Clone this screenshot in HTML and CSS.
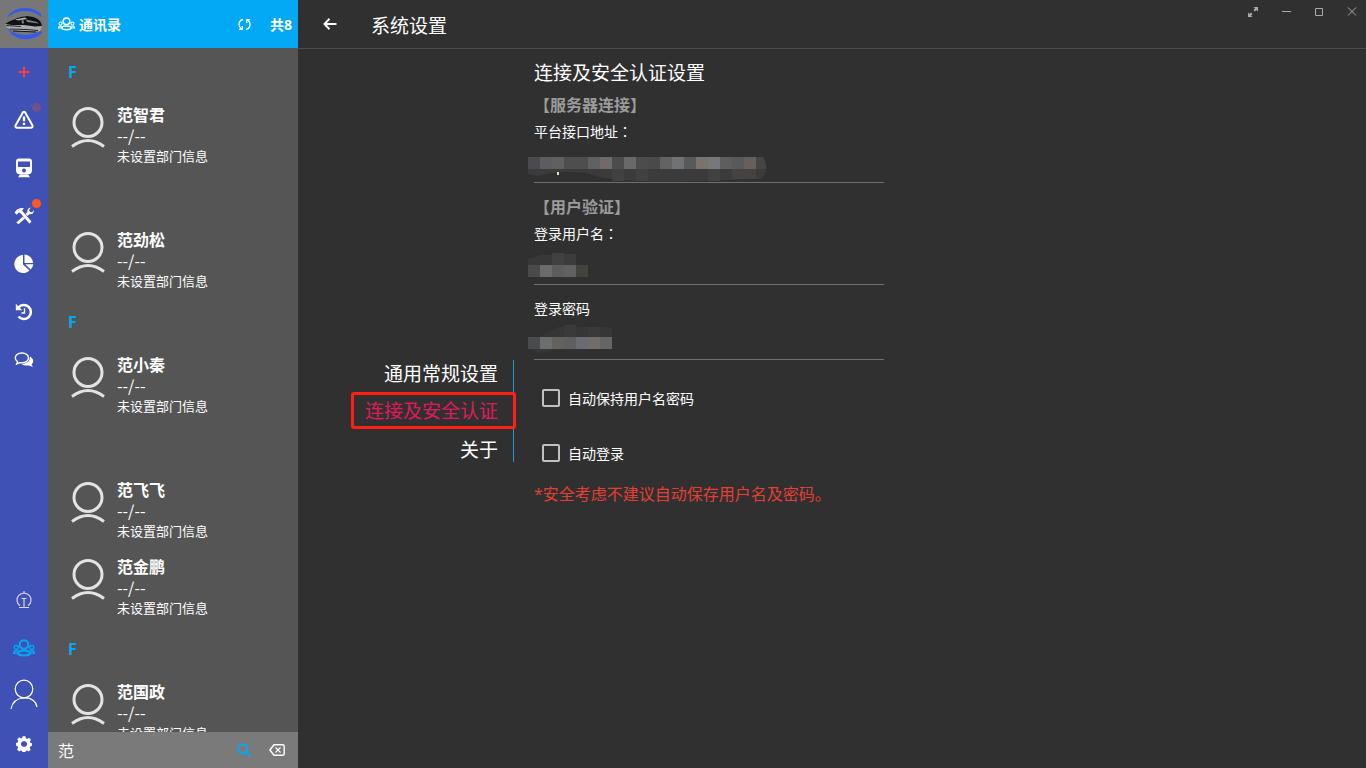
FILE: index.html
```html
<!DOCTYPE html>
<html lang="zh-CN">
<head>
<meta charset="utf-8">
<meta name="viewport" content="width=device-width, initial-scale=1">
<title>系统设置</title>
<link rel="stylesheet" href="styles.css">
</head>
<body>
<svg class="defs" aria-hidden="true">
  <symbol id="person" viewBox="0 0 34 42">
    <circle cx="17" cy="15.500" r="14" fill="none" stroke="currentColor" stroke-width="3"/>
    <path d="M1 39.500Q17 27.500 33 39.500" fill="none" stroke="currentColor" stroke-width="3"/>
  </symbol>
  <symbol id="people" viewBox="0 0 22 18">
    <g fill="none" stroke="currentColor">
      <circle cx="11" cy="5.500" r="4.300" stroke-width="2"/>
      <ellipse cx="11" cy="14" rx="6" ry="2.500" stroke-width="2"/>
      <circle cx="3.300" cy="8.500" r="2" stroke-width="1.300"/>
      <circle cx="18.700" cy="8.500" r="2" stroke-width="1.300"/>
      <path d="M5 12H2Q.5 12.500.6 14.200H4.500M17 12h3q1.500.5 1.400 2.200h-3.900" stroke-width="1.400"/>
    </g>
  </symbol>
</svg>
<div class="app">
  <nav class="rail" aria-label="主导航">
    <div class="logo">
      <svg width="48" height="48" viewBox="0 0 48 48" aria-hidden="true">
        <path d="M7 18C12 6 32 5 41 14L41 17C32 9 17 9 7 18ZM7 27C12 35 27 38 41 31L42 33C33 42 13 42 7 27Z" fill="#3558e8"/>
        <path d="M5 24C9 22 12 19 17 18L26 16 36 18Q42 21 42 26L40 31 29 32 12 30 6 27Z" fill="#a9acae"/>
        <path d="M5 24 9 21.500C14 19 20 16.500 27 16Q41 17 42 26L35 26.500 24 25 12 25Z" fill="#111"/>
        <path d="M15 19.500 25 17.500 27 19 18 20.500Z" fill="#b2b4b5"/>
        <path d="M21.500 20.500 23.500 20 24 23.500 22 23.500ZM26 19.500 37 22 39 23.500 27 22Z" fill="#7c8083"/>
        <path d="M6 25.500 21 26.500M10 29 26 29.500 38 30.500" fill="none" stroke="#252525" stroke-width="1.200"/>
        <path d="M13 31 25 31.500 36 32" fill="none" stroke="#111" stroke-width="1"/>
      </svg>
    </div>
    <button class="rail-btn add" aria-label="新增"><svg width="12" height="12" viewBox="0 0 12 12"><path d="M6 .5v11M.5 6h11" stroke="currentColor" stroke-width="2"/></svg></button>
    <button class="rail-btn" aria-label="告警"><svg width="20" height="20" viewBox="0 0 20 20"><path d="M8.700 2.700 1.500 15.500Q1 17.800 3.200 17.800H16.800Q19 17.800 18.500 15.500L11.300 2.700Q10 1 8.700 2.700Z" fill="none" stroke="currentColor" stroke-width="2" stroke-linejoin="round"/><path d="M10 6.500v4.800M10 12.800v2.200" stroke="currentColor" stroke-width="2.400"/></svg><span class="dot dim"></span></button>
    <button class="rail-btn" aria-label="列车"><svg width="18" height="20" viewBox="0 0 18 20"><path fill-rule="evenodd" d="M4 .5h10q3 0 3 3v9q0 3.500-4 4h-8q-4-.5-4-4v-9q0-3 3-3ZM3 3.500v5.500h12v-5.500ZM9 10.500a2 2 0 1 0 .01 0Z" fill="currentColor"/><path d="M5 16.500 3 19.200h12L13 16.500" fill="currentColor"/></svg></button>
    <button class="rail-btn" aria-label="工具"><svg width="20" height="18" viewBox="0 0 20 18"><path d="M.5 5.500 3 2.500Q6 .2 10 1.200L8 3.500l9.500 11-2 2.300-9.500-11-1.500 0-1.800 2Z" fill="currentColor"/><path d="M11.500 7 13.500 5Q12.500 1.500 17 .4L15 3l1 2 2.300.3L19.500 3Q20.500 7.500 15.500 7.200L13.500 9ZM9 9.500 11 11.500 4.500 17.300 2.300 15.500Z" fill="currentColor"/></svg><span class="dot"></span></button>
    <button class="rail-btn" aria-label="统计"><svg width="20" height="20" viewBox="0 0 20 20"><path d="M9 1A9 9 0 1 0 15.500 16.500L9 10.500Z" fill="currentColor"/><path d="M10.500.5A9 9 0 0 1 19 9h-8.500ZM11.200 10.300H19.300A9 9 0 0 1 16.700 15.500Z" fill="currentColor"/></svg></button>
    <button class="rail-btn" aria-label="历史"><svg width="18" height="18" viewBox="0 0 18 18"><path d="M3.500 4.500A7 7 0 1 1 3.500 13.500" fill="none" stroke="currentColor" stroke-width="2.600"/><path d="M.8.8V7.200H7.200Z" fill="currentColor"/><path d="M9.500 5.300v4.700H6.500" fill="none" stroke="currentColor" stroke-width="1.400"/></svg></button>
    <button class="rail-btn" aria-label="消息"><svg width="20" height="18" viewBox="0 0 20 18"><path d="M8 2C3.500 2 1.300 4.300 1.300 7q0 2.300 2.200 3.700L2.700 13l3-1.300C12 12.400 14.500 9.500 14.500 7S12 2 8 2Z" fill="none" stroke="currentColor" stroke-width="1.400"/><path d="M16 5.500C20 8 20 11.500 17.500 13.300l1.300 2.700-3.800-1.500Q10 15 7.300 13 16 13 16 5.500Z" fill="currentColor"/></svg></button>
    <div class="spacer"></div>
    <button class="rail-btn soft" aria-label="监控"><svg width="16" height="18" viewBox="0 0 16 18"><path d="M4 14.800A7 7 0 1 1 12 14.800M8 0v2M5.500 7.500h5M8 7.500v9M3 16.500h10" fill="none" stroke="currentColor" stroke-width="1.200"/></svg></button>
    <button class="rail-btn active" aria-label="通讯录"><svg width="22" height="18"><use href="#people"/></svg></button>
    <button class="rail-btn" aria-label="个人"><svg width="28" height="34" viewBox="0 0 28 34"><circle cx="14" cy="10" r="8.800" fill="none" stroke="currentColor" stroke-width="1.200"/><path d="M1 30Q3 19.500 14 19T27 28" fill="none" stroke="currentColor" stroke-width="1.200"/></svg></button>
    <button class="rail-btn" aria-label="设置"><svg width="16" height="16" viewBox="0 0 16 16"><path fill-rule="evenodd" d="M6.600.3h2.800l.5 2 1.300.6 1.800-1.100 2 2-1.100 1.800.6 1.300 1.500.4v2.500l-1.800.7-.5 1.400 1.100 1.700-2 2-1.800-1-1.300.5-.4 1.600H6.600l-.4-1.800-1.400-.5-1.700 1-2-2 1-1.700-.5-1.400L0 9.400V6.900l1.700-.5.5-1.300-1-1.800 2-2 1.700 1.100 1.300-.5ZM8 5a3 3 0 1 0 .01 0Z" fill="currentColor"/></svg></button>
  </nav>

  <aside class="contacts">
    <header class="contacts-head">
      <svg width="17" height="14"><use href="#people"/></svg>
      <h2>通讯录</h2>
      <button class="plain" aria-label="刷新"><svg width="13" height="13" viewBox="0 0 13 13"><path d="M5 1.500Q1 2.500 1 6.500q0 3 2.500 4.500M8 11.500Q12 10.500 12 6.500 12 3.500 9.500 2M1 11.300h3.200V8M12 1.700H8.800V5" fill="none" stroke="currentColor" stroke-width="1.300"/></svg></button>
      <span class="count">共8</span>
    </header>
    <div class="list">
      <h3 class="letter">F</h3>
      <article class="contact"><svg width="34" height="42"><use href="#person"/></svg><div><h4>范智君</h4><p class="phone">--/--</p><p>未设置部门信息</p></div></article>
      <h3 class="letter"></h3>
      <article class="contact"><svg width="34" height="42"><use href="#person"/></svg><div><h4>范劲松</h4><p class="phone">--/--</p><p>未设置部门信息</p></div></article>
      <h3 class="letter">F</h3>
      <article class="contact"><svg width="34" height="42"><use href="#person"/></svg><div><h4>范小秦</h4><p class="phone">--/--</p><p>未设置部门信息</p></div></article>
      <h3 class="letter"></h3>
      <article class="contact"><svg width="34" height="42"><use href="#person"/></svg><div><h4>范飞飞</h4><p class="phone">--/--</p><p>未设置部门信息</p></div></article>
      <article class="contact"><svg width="34" height="42"><use href="#person"/></svg><div><h4>范金鹏</h4><p class="phone">--/--</p><p>未设置部门信息</p></div></article>
      <h3 class="letter">F</h3>
      <article class="contact"><svg width="34" height="42"><use href="#person"/></svg><div><h4>范国政</h4><p class="phone">--/--</p><p>未设置部门信息</p></div></article>
    </div>
    <form class="search">
      <input type="text" value="范" aria-label="搜索联系人">
      <button type="button" class="plain find" aria-label="搜索"><svg width="14" height="14" viewBox="0 0 14 14"><circle cx="5.800" cy="5.800" r="4.600" fill="none" stroke="currentColor" stroke-width="2"/><path d="M9 9l4.300 4.300" stroke="currentColor" stroke-width="2.200"/></svg></button>
      <button type="button" class="plain" aria-label="清除"><svg width="16" height="12" viewBox="0 0 16 12"><path d="M5 .8h8.500q1.700 0 1.700 1.500v7.400q0 1.500-1.700 1.500H5L.9 6Z" fill="none" stroke="currentColor" stroke-width="1.400" stroke-linejoin="round"/><path d="M6.500 3.500l5 5M11.500 3.500l-5 5" stroke="currentColor" stroke-width="1.100"/></svg></button>
    </form>
  </aside>

  <main class="main">
    <header class="topbar">
      <button class="back" aria-label="返回"><svg width="14" height="12" viewBox="0 0 14 12"><path d="M6.500.8 1.500 6l5 5.200M1.500 6H13.500" fill="none" stroke="currentColor" stroke-width="2"/></svg></button>
      <h1>系统设置</h1>
      <div class="window-tools">
        <button aria-label="全屏"><svg width="12" height="12" viewBox="0 0 12 12"><path d="M6.500 1H11V5.500L9.500 4 8 5.500 6.500 4 8 2.500ZM1 6.500V11H5.500L4 9.500 5.500 8 4 6.500 2.500 8Z" fill="currentColor"/></svg></button>
        <button aria-label="最小化"><svg width="12" height="12" viewBox="0 0 12 12"><path d="M2 5.500h9" stroke="currentColor"/></svg></button>
        <button aria-label="最大化"><svg width="12" height="12" viewBox="0 0 12 12"><path d="M2.500 2.500h7v7h-7Z" fill="none" stroke="currentColor"/></svg></button>
        <button aria-label="关闭"><svg width="12" height="12" viewBox="0 0 12 12"><path d="M2 1.500l8 8M10 1.500l-8 8" stroke="currentColor"/></svg></button>
      </div>
    </header>
    <div class="settings">
      <nav class="tabs" aria-label="设置分类">
        <a href="#general">通用常规设置</a>
        <a href="#security" class="current">连接及安全认证</a>
        <a href="#about">关于</a>
      </nav>
      <form class="panel">
        <h2>连接及安全认证设置</h2>
        <h3>【服务器连接】</h3>
        <div class="field">
          <label for="api">平台接口地址<span class="colon" lang="zh-TW">：</span></label>
          <input id="api" type="text">
          <svg class="mask" width="240" height="26" viewBox="0 0 240 26" aria-hidden="true">
            <path d="M0 12H238Q238 24 224 22 204 23 200 23 150 25 108 24 70 22 60 16 30 13 10 19L0 17Z" fill="#3b3b3b"/>
            <path d="M84 12h12v12h-12ZM108 12h12v12h-12ZM180 12h12v12h-12Z" fill="#404140"/><path d="M204 12h24v10h-24Z" fill="#454240"/>
            <path d="M0 0h12v12H0Z" fill="#4b4b4e"/><path d="M12 0h12v12H12Z" fill="#5c5c61"/><path d="M24 0h12v12H24Z" fill="#606060"/><path d="M36 0h12v12H36Z" fill="#504e4c"/><path d="M48 0h12v12H48Z" fill="#4e4e4e"/><path d="M60 0h12v12H60Z" fill="#606163"/><path d="M72 0h12v12H72Z" fill="#706b68"/><path d="M84 0h12v12H84Z" fill="#4c4c4e"/><path d="M96 0h12v12H96Z" fill="#68696b"/><path d="M108 0h12v12h-12Z" fill="#4c4c4c"/><path d="M120 0h12v12h-12Z" fill="#4c4a48"/><path d="M132 0h12v12h-12Z" fill="#626364"/><path d="M144 0h12v12h-12Z" fill="#717274"/><path d="M156 0h12v12h-12Z" fill="#58595b"/><path d="M168 0h12v12h-12Z" fill="#78736d"/><path d="M180 0h12v12h-12Z" fill="#77787a"/><path d="M192 0h12v12h-12Z" fill="#5e5e5e"/><path d="M204 0h12v12h-12Z" fill="#58595b"/><path d="M216 0h12v12h-12Z" fill="#66605d"/><path d="M228 0h7q4 6 3 12h-10Z" fill="#454545"/>
            <path d="M30 15v3" stroke="#f3dfbb" stroke-width="2"/>
          </svg>
        </div>
        <h3 class="next">【用户验证】</h3>
        <div class="field">
          <label for="user">登录用户名<span class="colon" lang="zh-TW">：</span></label>
          <input id="user" type="text">
          <svg class="mask" width="62" height="28" viewBox="0 0 62 28" aria-hidden="true">
            <path d="M0 12V4L12 0H48V12Z" fill="#383838"/><path d="M24-2h12v14H24Z" fill="#414141"/><path d="M36-1h12v13H36Z" fill="#3c3c3c"/>
            <path d="M0 10h12v12H0Z" fill="#4a4a4c"/><path d="M12 10h12v12H12Z" fill="#6b6b6b"/><path d="M24 10h12v12H24Z" fill="#5b5d5f"/><path d="M36 10h12v12H36Z" fill="#61615f"/><path d="M48 10h12v12H48Z" fill="#43423c"/>
          </svg>
        </div>
        <div class="field next">
          <label for="password">登录密码</label>
          <input id="password" type="password">
          <svg class="mask" width="90" height="28" viewBox="0 0 90 28" aria-hidden="true">
            <path d="M12 10 30 0H78L84 2V12H12ZM0 20H90Q60 24 30 22L10 26Z" fill="#363636"/><path d="M36-2h12v14H36Z" fill="#393a39"/><path d="M60 0h12v12H60Z" fill="#3b3a38"/>
            <path d="M0 10h12v12H0Z" fill="#4a4b4c"/><path d="M12 10h12v12H12Z" fill="#6c6e6d"/><path d="M24 10h12v12H24Z" fill="#63625d"/><path d="M36 10h12v12H36Z" fill="#5d5f60"/><path d="M48 10h12v12H48Z" fill="#6b6c72"/><path d="M60 10h12v12H60Z" fill="#716e69"/><path d="M72 10h12v12H72Z" fill="#656566"/>
          </svg>
        </div>
        <div class="checks">
          <label><input type="checkbox">自动保持用户名密码</label>
          <label><input type="checkbox">自动登录</label>
        </div>
        <p class="warning">*安全考虑不建议自动保存用户名及密码。</p>
      </form>
    </div>
  </main>
</div>
</body>
</html>
```
FILE: styles.css
```css
* {
  box-sizing: border-box;
}

body {
  margin: 0;
  background: #303030;
  color: #fff;
  font-family: "Open Sans", "Noto Sans CJK SC", sans-serif;
  font-size: 14px;
}

h1, h2, h3, h4, p {
  margin: 0;
}

button, input {
  font: inherit;
  color: inherit;
}

button {
  padding: 0;
  border: 0;
  background: none;
  cursor: pointer;
}

svg {
  display: block;
}

.defs {
  position: absolute;
  width: 0;
  height: 0;
}

.app {
  display: flex;
  height: 100vh;
}

/* Icon rail */
.rail {
  display: flex;
  flex: 0 0 48px;
  flex-direction: column;
  background: #3f51b5;
}

.logo {
  height: 48px;
  background: #777;
}

.rail-btn {
  position: relative;
  display: grid;
  height: 48px;
  place-items: center;
}

.add {
  color: #f44336;
}

.soft {
  color: #d5d3e0;
}

.active {
  color: #03a9f4;
}

.spacer {
  flex: 1;
}

.dot {
  position: absolute;
  top: 7px;
  right: 7px;
  width: 9px;
  height: 9px;
  border-radius: 50%;
  background: #ff5722;
}

.dim {
  opacity: .25;
}

/* Contacts */
.contacts {
  display: flex;
  flex: 0 0 250px;
  flex-direction: column;
  min-width: 0;
  background: #555;
}

.contacts-head {
  display: flex;
  flex: 0 0 48px;
  align-items: center;
  padding: 0 6px 0 10px;
  background: #03a9f4;
  font-weight: 700;
}

.contacts-head h2 {
  flex: 1;
  margin-left: 4px;
  font-size: 14px;
}

.count {
  margin-left: 19px;
}

.list {
  flex: 1;
  min-height: 0;
  overflow-y: auto;
  scrollbar-width: none;
}

.letter {
  height: 48px;
  padding-left: 20px;
  color: #03a9f4;
  font-size: 16px;
  line-height: 48px;
}

.contact {
  display: flex;
  gap: 12px;
  height: 77px;
  padding: 8px 0 0 23px;
}

.contact svg {
  margin-top: 3px;
  color: #e3e3e3;
}

.contact h4 {
  font-size: 16px;
  line-height: 22px;
}

.contact p {
  font-size: 13px;
  line-height: 20px;
}

.contact .phone {
  margin-bottom: 2px;
  font-family: "Noto Sans CJK SC", sans-serif;
  font-size: 16px;
  line-height: 18px;
}

.search {
  display: flex;
  flex: 0 0 36px;
  align-items: center;
  gap: 18px;
  padding: 0 13px 0 10px;
  background: #7a7a7a;
}

.search input {
  flex: 1;
  min-width: 0;
  padding: 0;
  border: 0;
  outline: 0;
  background: none;
  font-size: 16px;
}

.find {
  color: #03a9f4;
}

/* Settings */
.main {
  display: flex;
  flex: 1;
  flex-direction: column;
  min-width: 0;
}

.topbar {
  display: flex;
  flex: 0 0 49px;
  align-items: center;
  border-bottom: 1px solid #4c4c4c;
}

.back {
  display: grid;
  width: 64px;
  height: 48px;
  place-items: center;
}

.topbar h1 {
  flex: 1;
  margin-left: 9px;
  padding-top: 2px;
  font-size: 19px;
  font-weight: 400;
}

.window-tools {
  display: flex;
  align-self: flex-start;
  gap: 5px;
}

.window-tools button {
  display: grid;
  width: 28px;
  height: 24px;
  place-items: center;
  color: #aaa;
}

.settings {
  display: grid;
  flex: 1;
  grid-template-columns: 216px minmax(0, 350px);
  gap: 20px;
  padding: 10px 0 5px;
}

.tabs {
  display: flex;
  flex-direction: column;
  align-items: flex-end;
  align-self: center;
  border-right: 1px solid #1a9bd7;
}

.tabs a {
  margin-right: -3px;
  padding: 2px 18px 0 11px;
  color: #fff;
  font-size: 19px;
  line-height: 24px;
  text-decoration: none;
}

.tabs .current {
  margin-top: 6px;
  margin-bottom: 7px;
  padding-right: 15px;
  border: 3px solid #ff1f14;
  border-radius: 3px;
  color: #e0195f;
  line-height: 29px;
  background: #303030;
}

.panel h2 {
  font-size: 19px;
  font-weight: 400;
  line-height: 28px;
}

.panel h3 {
  margin-top: 7px;
  color: #9b9b9b;
  font-size: 16px;
  line-height: 22px;
}

.panel .next {
  margin-top: 13px;
}

.panel .field.next {
  margin-top: 14px;
}

.field {
  position: relative;
  margin-top: 6px;
}

.field label {
  display: block;
  line-height: 20px;
}

.colon {
  font-family: "Noto Sans CJK TC", sans-serif;
  line-height: 1;
}

.field input {
  display: block;
  width: 100%;
  height: 41px;
  padding: 0;
  border: 0;
  border-bottom: 1px solid #707070;
  outline: 0;
  background: none;
}

.mask {
  position: absolute;
  top: 35px;
  left: -6px;
  overflow: visible;
}

.field:has(#user) .mask {
  top: 31px;
}

.field:has(#password) .mask {
  top: 28px;
}

.checks {
  margin-top: 10px;
}

.checks label {
  display: flex;
  align-items: center;
  gap: 8px;
  height: 55px;
  padding-left: 8px;
}

.checks input {
  width: 18px;
  height: 18px;
  margin: 0;
  border: 2px solid #c1c1c1;
  border-radius: 2px;
  appearance: none;
}

.checks input:checked {
  background: #03a9f4;
}

.warning {
  margin-top: 2px;
  color: #e53f35;
  font-size: 16px;
  line-height: 24px;
}
```
